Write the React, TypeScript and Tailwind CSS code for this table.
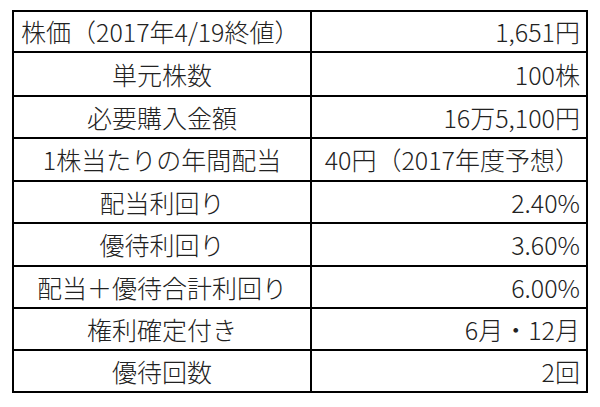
const rows = [
  { label: "株価（2017年4/19終値）", value: "1,651円", h: "h-[41px]", left: true },
  { label: "単元株数", value: "100株", h: "h-[44px]" },
  { label: "必要購入金額", value: "16万5,100円", h: "h-[42px]" },
  { label: "1株当たりの年間配当", value: "40円（2017年度予想）", h: "h-[43px]" },
  { label: "配当利回り", value: "2.40%", h: "h-[42px]" },
  { label: "優待利回り", value: "3.60%", h: "h-[43px]" },
  { label: "配当＋優待合計利回り", value: "6.00%", h: "h-[42px]" },
  { label: "権利確定付き", value: "6月・12月", h: "h-[42px]" },
  { label: "優待回数", value: "2回", h: "h-[42px]" },
];

export default function App() {
  return (
    <div className="w-[600px] h-[407px] bg-white pt-[10px] pl-[12px] text-[#222] text-[25px] font-light leading-none [font-family:'Noto_Sans_CJK_JP',sans-serif]">
      <div className="w-[576px] border-t-2 border-l-2 border-black">
        {rows.map((r) => (
          <div key={r.label} className={`grid grid-cols-[298px_276px] ${r.h}`}>
            <div
              className={
                r.left
                  ? "flex items-center justify-start pl-[7px] border-r-2 border-b-2 border-black whitespace-nowrap"
                  : "flex items-center justify-center border-r-2 border-b-2 border-black whitespace-nowrap"
              }
            >
              {r.label}
            </div>
            <div className="flex items-center justify-end pr-[6px] border-r-2 border-b-2 border-black whitespace-nowrap">
              {r.value}
            </div>
          </div>
        ))}
      </div>
    </div>
  );
}
